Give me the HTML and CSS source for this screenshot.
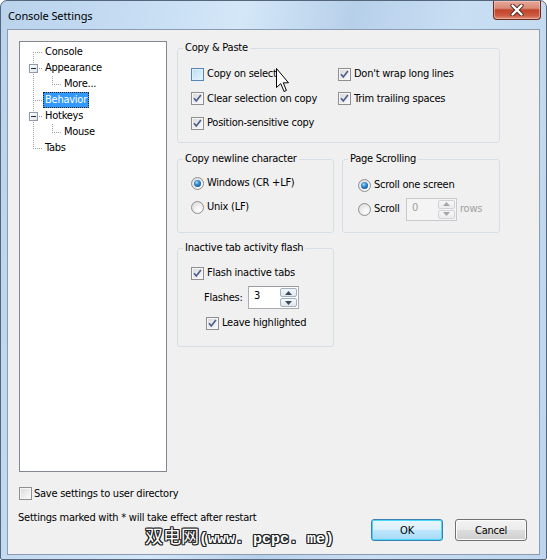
FILE: index.html
```html
<!DOCTYPE html>
<html>
<head>
<meta charset="utf-8">
<title>Console Settings</title>
<link rel="stylesheet" href="styles.css">
</head>
<body>
<div class="window">
  <div class="titlebar">
    <span class="title">Console Settings</span>
    <div class="close">
      <svg width="14" height="12" viewBox="0 0 14 12">
        <path d="M2.5 1.5 L11.5 10.5 M11.5 1.5 L2.5 10.5" stroke="#4a2a22" stroke-width="4.2" stroke-linecap="round"/>
        <path d="M2.5 1.5 L11.5 10.5 M11.5 1.5 L2.5 10.5" stroke="#ffffff" stroke-width="2.4" stroke-linecap="round"/>
      </svg>
    </div>
  </div>
  <div class="client">
    <div class="main">
      <div class="tree">
        <div class="trow"><span class="c conn bot"></span><span class="lbl">Console</span></div>
        <div class="trow"><span class="c conn top bot"><span class="exp"></span></span><span class="lbl">Appearance</span></div>
        <div class="trow"><span class="c v"></span><span class="c conn top"></span><span class="lbl">More...</span></div>
        <div class="trow"><span class="c conn top bot"></span><span class="lbl sel">Behavior</span></div>
        <div class="trow"><span class="c conn top bot"><span class="exp"></span></span><span class="lbl">Hotkeys</span></div>
        <div class="trow"><span class="c v"></span><span class="c conn top"></span><span class="lbl">Mouse</span></div>
        <div class="trow"><span class="c conn top"></span><span class="lbl">Tabs</span></div>
      </div>
      <div class="pane">
        <fieldset class="group g-copy">
          <legend>Copy &amp; Paste</legend>
          <div class="copy-grid">
            <div class="opt"><span class="cb hover"></span>Copy on select</div>
            <div class="opt"><span class="cb"><svg class="chk" viewBox="0 0 11 11"><path d="M2 5.2 L4.3 8 L8.9 2"/></svg></span>Don't wrap long lines</div>
            <div class="opt"><span class="cb"><svg class="chk" viewBox="0 0 11 11"><path d="M2 5.2 L4.3 8 L8.9 2"/></svg></span>Clear selection on copy</div>
            <div class="opt"><span class="cb"><svg class="chk" viewBox="0 0 11 11"><path d="M2 5.2 L4.3 8 L8.9 2"/></svg></span>Trim trailing spaces</div>
            <div class="opt"><span class="cb"><svg class="chk" viewBox="0 0 11 11"><path d="M2 5.2 L4.3 8 L8.9 2"/></svg></span>Position-sensitive copy</div>
          </div>
        </fieldset>
        <div class="pair">
          <fieldset class="group g-nl">
            <legend>Copy newline character</legend>
            <div class="rows rows-nl">
              <div class="opt"><span class="radio on"></span>Windows (CR +LF)</div>
              <div class="opt"><span class="radio"></span>Unix (LF)</div>
            </div>
          </fieldset>
          <fieldset class="group g-ps">
            <legend>Page Scrolling</legend>
            <div class="rows rows-ps">
              <div class="opt"><span class="radio on"></span>Scroll one screen</div>
              <div class="opt"><span class="radio"></span><span class="scroll-lbl">Scroll</span>
                <span class="spin disabled">
                  <span class="val">0</span>
                  <span class="btns">
                    <span class="sb"><svg width="7" height="4" viewBox="0 0 7 4"><path d="M0 4 L3.5 0 L7 4 Z"/></svg></span>
                    <span class="sb"><svg width="7" height="4" viewBox="0 0 7 4"><path d="M0 0 L3.5 4 L7 0 Z"/></svg></span>
                  </span>
                </span>
                <span class="rows-lbl">rows</span>
              </div>
            </div>
          </fieldset>
        </div>
        <fieldset class="group g-flash">
          <legend>Inactive tab activity flash</legend>
          <div class="flash-rows">
            <div class="opt r1"><span class="cb"><svg class="chk" viewBox="0 0 11 11"><path d="M2 5.2 L4.3 8 L8.9 2"/></svg></span>Flash inactive tabs</div>
            <div class="opt r2"><span class="flashes-lbl">Flashes:</span>
              <span class="spin">
                <span class="val">3</span>
                <span class="btns">
                  <span class="sb"><svg width="7" height="4" viewBox="0 0 7 4"><path d="M0 4 L3.5 0 L7 4 Z"/></svg></span>
                  <span class="sb"><svg width="7" height="4" viewBox="0 0 7 4"><path d="M0 0 L3.5 4 L7 0 Z"/></svg></span>
                </span>
              </span>
            </div>
            <div class="opt r3"><span class="cb"><svg class="chk" viewBox="0 0 11 11"><path d="M2 5.2 L4.3 8 L8.9 2"/></svg></span>Leave highlighted</div>
          </div>
        </fieldset>
      </div>
    </div>
    <div class="opt save"><span class="cb"></span>Save settings to user directory</div>
    <div class="footer">
      <span class="note">Settings marked with * will take effect after restart</span>
      <div class="buttons">
        <button class="btn default">OK</button>
        <button class="btn">Cancel</button>
      </div>
    </div>
    <div class="watermark"><span class="cjk">双电网</span>(www. pcpc. me)</div>
    <svg class="cursor" width="13" height="27" viewBox="0 0 13 27">
      <path d="M0.5 0.5 L0.5 19.5 L4.8 15.6 L8 23.5 L10.4 22.5 L7.3 14.8 L12.5 14.8 Z" fill="#fff" stroke="#000" stroke-width="1" stroke-linejoin="miter"/>
    </svg>
  </div>
</div>
</body>
</html>
```

FILE: styles.css
```css
html, body {
  margin: 0;
  padding: 0;
  background: #ffffff;
}

.window {
  box-sizing: border-box;
  width: 547px;
  height: 560px;
  border: 1px solid #56667a;
  border-radius: 7px 7px 2px 2px;
  background: linear-gradient(100deg, #bad3ec 0%, #c6ddf3 22%, #d4e7f8 38%, #b7d0ea 55%, #c8def3 72%, #bdd6ee 100%);
  display: flex;
  flex-direction: column;
  font-family: "DejaVu Sans Condensed", "Liberation Sans", sans-serif;
  font-stretch: condensed;
  font-size: 11px;
  letter-spacing: -0.25px;
  color: #000;
}

.titlebar {
  height: 28px;
  flex: none;
  display: flex;
  justify-content: space-between;
  align-items: flex-start;
  padding-left: 7px;
}

.title {
  font-family: "Noto Sans", "Open Sans", sans-serif;
  font-stretch: normal;
  font-size: 11px;
  letter-spacing: -0.1px;
  line-height: 14px;
  margin-top: 8px;
  color: #000;
}

.close {
  width: 48px;
  height: 19px;
  margin-right: 5px;
  box-sizing: border-box;
  border: 1px solid #6a2a1e;
  border-top: none;
  border-radius: 0 0 4px 4px;
  background: linear-gradient(#e8a898 0%, #d98a78 40%, #c2442c 50%, #cc5a40 80%, #e0907a 100%);
  box-shadow: inset 0 0 0 1px rgba(255, 220, 210, 0.45);
  display: flex;
  align-items: center;
  justify-content: center;
}

.client {
  flex: 1;
  position: relative;
  margin: 0 6px 4px 6px;
  border: 1px solid #8a9cb2;
  background: #f0f0f0;
}

.main {
  display: grid;
  grid-template-columns: 148px 323px;
  column-gap: 10px;
  padding: 11px 0 0 11px;
}

.tree {
  box-sizing: border-box;
  height: 431px;
  border: 1px solid #828790;
  background: #fff;
  padding-top: 2px;
}

.trow {
  display: flex;
  height: 16px;
  align-items: center;
}

.c {
  flex: none;
  height: 16px;
  width: 19px;
  display: flex;
  align-items: center;
}

.c.conn {
  width: 23px;
  background-image: repeating-linear-gradient(to right, #a0a0a0 0 1px, transparent 1px 2px);
  background-size: 10px 1px;
  background-position: 13px 8px;
  background-repeat: no-repeat;
}

.c.v {
  background: repeating-linear-gradient(to bottom, #a0a0a0 0 1px, transparent 1px 2px) 13px 0 / 1px 16px no-repeat;
}

.c.conn.top {
  background-image:
    repeating-linear-gradient(to right, #a0a0a0 0 1px, transparent 1px 2px),
    repeating-linear-gradient(to bottom, #a0a0a0 0 1px, transparent 1px 2px);
  background-size: 10px 1px, 1px 8px;
  background-position: 13px 8px, 13px 0;
}

.c.conn.bot {
  background-image:
    repeating-linear-gradient(to right, #a0a0a0 0 1px, transparent 1px 2px),
    repeating-linear-gradient(to bottom, #a0a0a0 0 1px, transparent 1px 2px);
  background-size: 10px 1px, 1px 8px;
  background-position: 13px 8px, 13px 8px;
}

.c.conn.top.bot {
  background-image:
    repeating-linear-gradient(to right, #a0a0a0 0 1px, transparent 1px 2px),
    repeating-linear-gradient(to bottom, #a0a0a0 0 1px, transparent 1px 2px);
  background-size: 10px 1px, 1px 16px;
  background-position: 13px 8px, 13px 0;
}

.exp {
  box-sizing: border-box;
  width: 9px;
  height: 9px;
  margin-left: 9px;
  margin-top: 1px;
  border: 1px solid #919aa8;
  background:
    linear-gradient(#1e2b3c, #1e2b3c) center / 5px 1px no-repeat,
    linear-gradient(135deg, #ffffff, #dfe3e8);
}

.lbl {
  box-sizing: border-box;
  height: 16px;
  line-height: 14px;
  padding: 0 1px;
  border: 1px solid transparent;
  white-space: nowrap;
}

.lbl.sel {
  background: #3399ff;
  color: #fff;
  border: 1px dotted #222;
}

.pane {
  display: flex;
  flex-direction: column;
}

.group {
  margin: 0;
  padding: 0;
  min-width: 0;
  box-sizing: border-box;
  border: 1px solid #d5dfe5;
  border-radius: 3px;
}

.group legend {
  margin-left: 5px;
  padding: 0 2px;
  line-height: 14px;
  height: 14px;
}

.opt {
  display: flex;
  align-items: center;
  gap: 3px;
  white-space: nowrap;
  line-height: 14px;
}

.g-copy {
  height: 102px;
}

.copy-grid {
  display: grid;
  grid-template-columns: 147px auto;
  grid-template-rows: 24px 25px 24px;
  padding: 7px 0 0 13px;
}

.pair {
  display: flex;
  gap: 8px;
  margin-top: 9px;
}

.g-nl {
  width: 157px;
  height: 81px;
}

.g-ps {
  width: 158px;
  height: 81px;
}

.rows {
  display: grid;
  grid-template-rows: 24px 24px;
}

.rows-nl {
  padding: 5px 0 0 13px;
}

.rows-ps {
  padding: 7px 0 0 15px;
}

.scroll-lbl {
  width: 29px;
}

.rows-lbl {
  color: #a0a0a0;
}

.g-flash {
  width: 157px;
  height: 106px;
  margin-top: 8px;
}

.flash-rows {
  display: grid;
  grid-template-rows: 24px 25px 26px;
  padding: 6px 0 0 13px;
}

.r2 {
  padding-left: 13px;
  gap: 0;
}

.r3 {
  padding-left: 15px;
}

.flashes-lbl {
  width: 44px;
}

.cb {
  flex: none;
  box-sizing: border-box;
  width: 13px;
  height: 13px;
  border: 1px solid #8e8f8f;
  background: linear-gradient(135deg, #d8d8d8 0%, #ececec 55%, #fafafa 100%);
  box-shadow: inset 0 0 0 1px #f6f6f6;
  display: flex;
}

.cb.hover {
  border-color: #5586b6;
  background: linear-gradient(135deg, #b9dcf5 0%, #d5ebfa 60%, #eaf6fd 100%);
  box-shadow: inset 0 0 0 1px #def0fc;
}

.chk {
  width: 11px;
  height: 11px;
}

.chk path {
  fill: none;
  stroke: #4a5f90;
  stroke-width: 1.7;
}

.radio {
  flex: none;
  box-sizing: border-box;
  width: 13px;
  height: 13px;
  border-radius: 50%;
  border: 1px solid #8e8f8f;
  background: radial-gradient(circle at 65% 70%, #ffffff 0%, #eeeeee 45%, #d4d4d4 100%);
  display: flex;
}

.radio.on::after {
  content: "";
  display: block;
  width: 7px;
  height: 7px;
  margin: 2px;
  border-radius: 50%;
  background: radial-gradient(circle at 40% 35%, #a6e2ff 0%, #3b8fd0 35%, #165a9c 75%, #0e3f72 100%);
}

.spin {
  flex: none;
  box-sizing: border-box;
  display: flex;
  width: 51px;
  height: 23px;
  border: 1px solid #abadb3;
  border-top-color: #9a9ca2;
  background: #fff;
  padding: 1px;
}

.spin .val {
  flex: 1;
  padding-left: 4px;
  line-height: 15px;
}

.spin .btns {
  width: 17px;
  display: flex;
  flex-direction: column;
  gap: 1px;
}

.spin .sb {
  flex: 1;
  box-sizing: border-box;
  border: 1px solid #a3b0bf;
  border-radius: 2px;
  background: linear-gradient(#f6f9fc, #dfe7ef);
  display: flex;
  align-items: center;
  justify-content: center;
}

.spin .sb path {
  fill: #3c4a5c;
}

.spin.disabled {
  border-color: #c8c9cc;
  background: #f4f4f4;
}

.spin.disabled .val {
  color: #a0a0a0;
}

.spin.disabled .sb {
  border-color: #cfd3d8;
  background: linear-gradient(#f6f6f6, #ececec);
}

.spin.disabled .sb path {
  fill: #a6a6a6;
}

.save {
  margin: 15px 0 0 11px;
  height: 13px;
  gap: 2px;
}

.footer {
  display: flex;
  justify-content: space-between;
  align-items: flex-start;
  margin-top: 11px;
  padding: 0 12px 0 10px;
}

.note {
  line-height: 14px;
}

.buttons {
  display: flex;
  gap: 12px;
  margin-top: 8px;
}

.btn {
  box-sizing: border-box;
  width: 72px;
  height: 22px;
  margin: 0;
  padding: 0;
  font-family: inherit;
  font-stretch: condensed;
  font-size: 11px;
  letter-spacing: -0.25px;
  color: #000;
  border: 1px solid #707070;
  border-radius: 3px;
  background: linear-gradient(#f2f2f2 0%, #ebebeb 50%, #dddddd 51%, #cfcfcf 100%);
  box-shadow: inset 0 0 0 1px #fcfcfc;
}

.btn.default {
  border-color: #3c7fb1;
  background: linear-gradient(#eaf6fd 0%, #d9f0fc 50%, #bee6fd 51%, #a7d9f5 100%);
  box-shadow: inset 0 0 0 1px #48d8fb;
}

.watermark {
  position: absolute;
  left: 137px;
  top: 495px;
  font-family: "Liberation Mono", "Noto Sans CJK SC", monospace;
  font-stretch: normal;
  font-size: 15px;
  font-weight: bold;
  letter-spacing: 0;
  line-height: 20px;
  color: #fff;
  white-space: nowrap;
  text-shadow: 1px 0 0 #222, -1px 0 0 #222, 0 1px 0 #222, 0 -1px 0 #222, 1px 1px 0 #222, -1px -1px 0 #222, 1px -1px 0 #222, -1px 1px 0 #222;
}

.watermark .cjk {
  font-family: "Noto Sans CJK SC", sans-serif;
  font-size: 18px;
  font-weight: normal;
}

.cursor {
  position: absolute;
  left: 268px;
  top: 38px;
}
```
